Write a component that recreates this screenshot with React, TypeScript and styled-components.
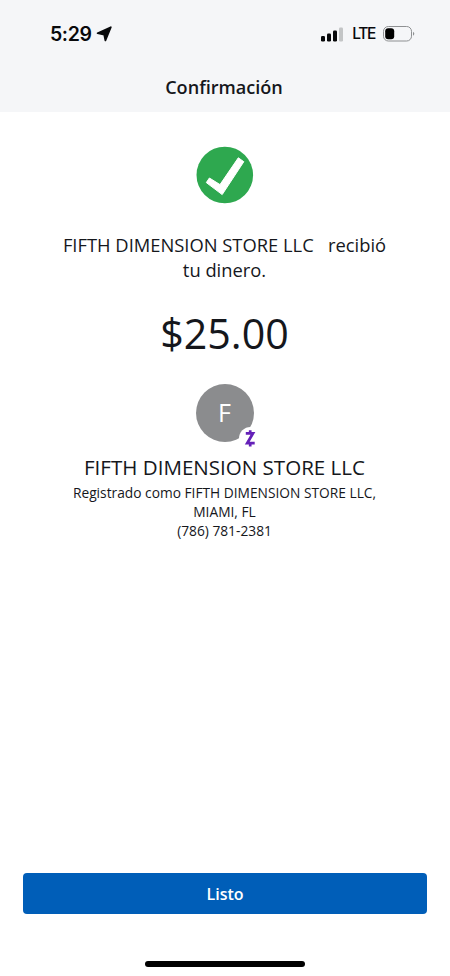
import React from "react";
import styled, { createGlobalStyle } from "styled-components";

const GlobalStyle = createGlobalStyle`
  * {
    box-sizing: border-box;
    margin: 0;
    padding: 0;
  }

  body {
    background: #fff;
    color: #15171c;
    font-family: "Open Sans", sans-serif;
  }
`;

const Screen = styled.div`
  display: flex;
  flex-direction: column;
  align-items: center;
  height: 976px;
  overflow: hidden;
`;

const Header = styled.header`
  width: 100%;
  height: 112px;
  background: #f5f6f8;
`;

const StatusBar = styled.div`
  display: flex;
  justify-content: space-between;
  align-items: center;
  height: 68px;
  padding: 0 35px 0 50px;
`;

const StatusGroup = styled.div<{ $gap: number }>`
  display: flex;
  align-items: center;
  gap: ${({ $gap }) => $gap}px;
`;

const Time = styled.span`
  font: 600 19.5px/24px Inter, sans-serif;
  letter-spacing: -0.4px;
  color: #08090b;
`;

const Network = styled.span`
  font: 500 15.5px/20px Inter, sans-serif;
  letter-spacing: -1.3px;
  color: #08090b;
`;

const Title = styled.h1`
  font-size: 18.1px;
  line-height: 24px;
  font-weight: 600;
  text-align: center;
  margin-top: 7px;
  padding-right: 2px;
`;

const Content = styled.main`
  flex: 1;
  display: flex;
  flex-direction: column;
  align-items: center;
  padding-top: 34px;
`;

const Message = styled.p`
  width: 340px;
  margin-top: 28px;
  padding-right: 1px;
  font-size: 18.35px;
  line-height: 25px;
  text-align: center;
  white-space: pre-line;
`;

const Amount = styled.p`
  margin-top: 22px;
  padding-right: 1px;
  font-size: 41.2px;
  line-height: 58px;
`;

const Avatar = styled.div`
  position: relative;
  display: flex;
  align-items: center;
  justify-content: center;
  width: 58px;
  height: 58px;
  margin-top: 22px;
  padding: 0 1px 2px 0;
  border-radius: 50%;
  background: #8b8c8e;
  color: #fff;
  font-size: 25px;
`;

const ZelleBadge = styled.svg`
  position: absolute;
  left: 43px;
  top: 43px;
`;

const Recipient = styled.h2`
  margin-top: 11px;
  padding-right: 1px;
  font-size: 20.55px;
  line-height: 28px;
  font-weight: 400;
`;

const Details = styled.p`
  margin-top: 2px;
  padding-right: 1px;
  font-size: 13.75px;
  line-height: 19.2px;
  text-align: center;
`;

const Footer = styled.footer`
  display: flex;
  flex-direction: column;
  align-items: center;
  width: 100%;
  padding: 0 23px 9px;
`;

const DoneButton = styled.button`
  width: 100%;
  height: 41px;
  border: 0;
  border-radius: 4px;
  background: #005eb8;
  color: #fff;
  font: 600 16px/22px "Open Sans", sans-serif;
`;

const HomeIndicator = styled.div`
  width: 160px;
  height: 6px;
  margin-top: 47px;
  border-radius: 3px;
  background: #000;
`;

const App = () => (
  <>
    <GlobalStyle />
    <Screen>
      <Header>
        <StatusBar>
          <StatusGroup $gap={4}>
            <Time>5:29</Time>
            <svg width="16" height="16" viewBox="0 0 16 16">
              <path
                d="M14.8 1.2 9.4 14.4 8.2 8.6 1.6 7.2Z"
                fill="#08090b"
                stroke="#08090b"
                strokeWidth="1.8"
                strokeLinejoin="round"
              />
            </svg>
          </StatusGroup>
          <StatusGroup $gap={8}>
            <svg width="23" height="15" viewBox="0 0 23 15" fill="#08090b">
              <rect x="0" y="9" width="4" height="5.5" rx="1.2" />
              <rect x="6" y="6.5" width="4" height="8" rx="1.2" />
              <rect x="12" y="3.5" width="4" height="11" rx="1.2" />
              <rect x="18" y="0.5" width="4" height="14" rx="1.2" fill="#c3c5c6" />
            </svg>
            <Network>LTE</Network>
            <svg width="32" height="16" viewBox="0 0 32 16">
              <rect x=".5" y=".5" width="28" height="14.5" rx="4.8" fill="none" stroke="#8e9092" />
              <rect x="2.2" y="2.2" width="9" height="11" rx="3" fill="#000" />
              <path d="M30 5.8q2.6 2 0 4Z" fill="#8e9092" />
            </svg>
          </StatusGroup>
        </StatusBar>
        <Title>Confirmación</Title>
      </Header>
      <Content>
        <svg width="58" height="58" viewBox="0 0 58 58">
          <circle cx="28.8" cy="29" r="28.3" fill="#2ea84f" />
          <path
            d="M42.3 11.8 47.8 15.7 26.2 48.6 10.3 36.6 13.4 32 24 38.6Z"
            fill="#fff"
            stroke="#fff"
            strokeLinejoin="round"
          />
        </svg>
        <Message>{"FIFTH DIMENSION STORE LLC \u00a0 recibió\ntu dinero."}</Message>
        <Amount>$25.00</Amount>
        <Avatar>
          F
          <ZelleBadge width="23" height="23" viewBox="0 0 23 23">
            <circle cx="11.5" cy="11.5" r="11.5" fill="#fff" />
            <path
              d="M6.8 6.3H14L8.2 16.2H15.7M11.2 3.3V6.3M11.2 16.2V19.5"
              fill="none"
              stroke="#6420b8"
              strokeWidth="2.7"
            />
          </ZelleBadge>
        </Avatar>
        <Recipient>FIFTH DIMENSION STORE LLC</Recipient>
        <Details>
          Registrado como FIFTH DIMENSION STORE LLC,
          <br />
          MIAMI, FL
          <br />
          (786) 781-2381
        </Details>
      </Content>
      <Footer>
        <DoneButton>Listo</DoneButton>
        <HomeIndicator />
      </Footer>
    </Screen>
  </>
);

export default App;
